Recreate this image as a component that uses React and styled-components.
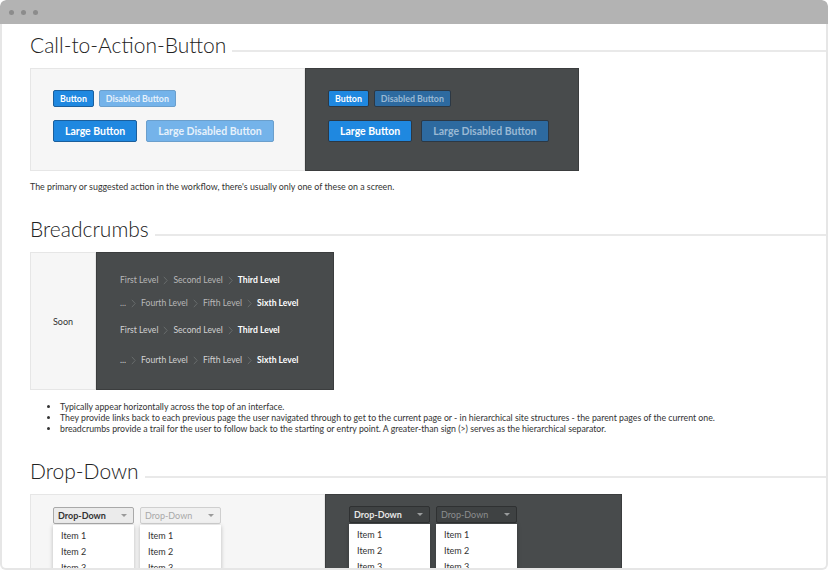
import React from 'react';
import styled, { createGlobalStyle } from 'styled-components';

const GlobalStyle = createGlobalStyle`
    body {
        margin: 0;
        background: #ffffff;
        font-family: Lato, "Open Sans", sans-serif;
        color: #333;
    }
`

const Window = styled.div`
    width: 828px;
    height: 570px;
    display: flex;
    flex-direction: column;
    border-radius: 6px 6px 0 0;
    overflow: hidden;
`

const TitleBar = styled.div`
    height: 24px;
    flex-shrink: 0;
    background: #b3b3b3;
    border-radius: 6px 6px 0 0;
    display: flex;
    align-items: center;
    gap: 7px;
    padding-left: 9px;
`

const Dot = styled.span`
    width: 5px;
    height: 5px;
    border-radius: 50%;
    background: #8c8c8c;
`

const Content = styled.div`
    flex: 1;
    min-height: 0;
    overflow: hidden;
    border: 2px solid #e6e6e6;
    border-top: none;
    border-radius: 0 0 6px 6px;
    padding: 9px 0 0 28px;
`

const Section = styled.section`
    margin-bottom: 25px;
`

const HeadingRow = styled.div`
    display: flex;
    align-items: flex-end;
    margin-bottom: 11px;
`

const Heading = styled.h2`
    margin: 0;
    font-weight: 300;
    font-size: 21px;
    line-height: 24px;
    color: #222;
    white-space: nowrap;
`

const HeadingLine = styled.div`
    flex: 1;
    height: 2px;
    background: #e9e9e9;
    margin: 0 0 5px 6px;
`

const Demo = styled.div`
    display: flex;
    height: ${p => p.height}px;
`

const Pane = styled.div`
    width: ${p => p.width}px;
    box-sizing: border-box;
    background: ${p => (p.dark ? '#484b4c' : '#f6f6f6')};
    border: 1px solid ${p => (p.dark ? '#3b3d3e' : '#e6e6e6')};
    padding: ${p => p.pad || '21px 0 0 22px'};
    display: flex;
    flex-direction: column;
    align-items: flex-start;
`

const CenterPane = styled(Pane)`
    padding: 0;
    align-items: center;
    justify-content: center;
    font-size: 9px;
    color: #333;
`

const ButtonRow = styled.div`
    display: flex;
    gap: ${p => (p.large ? 9 : 5)}px;
    margin-bottom: ${p => (p.large ? 0 : 13)}px;
`

const Button = styled.button`
    font-family: Lato, "Open Sans", sans-serif;
    font-weight: 700;
    font-size: ${p => (p.large ? 10.5 : 8.8)}px;
    height: ${p => (p.large ? 22 : 17)}px;
    padding: 0 ${p => (p.large ? 11 : 6)}px;
    border-radius: 2px;
    cursor: pointer;
    background: ${p => (p.disabled ? (p.dark ? '#2d6aa0' : '#74b3ea') : '#1f88e0')};
    color: ${p => (p.disabled ? (p.dark ? '#9ab9d4' : '#e6f1fb') : '#ffffff')};
    border: 1px solid ${p => (p.dark ? '#2c3844' : p.disabled ? '#6b9fcc' : '#1b5f9c')};
`

const Caption = styled.p`
    margin: 10px 0 0;
    font-size: 8.85px;
    color: #333;
`

const Crumbs = styled.div`
    display: flex;
    align-items: center;
    gap: 5px;
    font-size: 8.6px;
    color: ${p => (p.large ? '#d2d2d2' : '#b8b8b8')};
    margin-bottom: ${p => p.gap}px;
`

const Crumb = styled.span`
    color: ${p => (p.current ? '#ffffff' : 'inherit')};
    font-weight: ${p => (p.current ? 700 : 400)};
`

const Sep = styled.svg`
    width: 5px;
    height: 9px;
    flex-shrink: 0;
`

const BulletList = styled.ul`
    margin: 11px 0 0;
    padding-left: 30px;
    font-size: 8.75px;
    line-height: 11px;
    color: #333;
`

const DropGroup = styled.div`
    display: flex;
    gap: 6px;
`

const DropWrap = styled.div`
    width: 81px;
    display: flex;
    flex-direction: column;
`

const DropButton = styled.div`
    height: 17px;
    box-sizing: border-box;
    display: flex;
    align-items: center;
    justify-content: space-between;
    padding: 0 6px 0 4px;
    font-size: 9px;
    border-radius: 2px;
    background: ${p => (p.dark ? '#3f4243' : p.disabled ? '#f0f0f0' : '#ebebeb')};
    border: 1px solid ${p => (p.dark ? '#2f3132' : p.disabled ? '#cfcfcf' : '#a9a9a9')};
    color: ${p => (p.dark ? (p.disabled ? '#8c8e8f' : '#e6e6e6') : p.disabled ? '#a8a8a8' : '#333')};
    font-weight: ${p => (p.disabled ? 400 : 700)};

    &::after {
        content: '';
        border-left: 3px solid transparent;
        border-right: 3px solid transparent;
        border-top: 3px solid ${p => (p.dark ? '#9a9c9d' : '#9a9a9a')};
    }
`

const Menu = styled.ul`
    list-style: none;
    margin: 1px 0 0;
    padding: 3px 0;
    background: #fff;
    box-shadow: 0 1px 4px rgba(0, 0, 0, 0.25);
    border-radius: 0 0 2px 2px;
`

const MenuItem = styled.li`
    font-size: 9px;
    line-height: 16px;
    padding-left: 8px;
    color: #333;
`

function Chevron() {
    return (
        <Sep viewBox="0 0 5 9">
            <path d="M0.8 0.8 L4.2 4.5 L0.8 8.2" fill="none" stroke="#707374" strokeWidth="0.8" />
        </Sep>
    );
}

function Breadcrumb({ items, large, gap }) {
    return (
        <Crumbs large={large} gap={gap}>
            {items.map((item, i) => (
                <React.Fragment key={item}>
                    {i > 0 && <Chevron />}
                    <Crumb current={i === items.length - 1}>{item}</Crumb>
                </React.Fragment>
            ))}
        </Crumbs>
    );
}

function Dropdown({ dark, disabled }) {
    return (
        <DropWrap>
            <DropButton dark={dark} disabled={disabled}>Drop-Down</DropButton>
            <Menu>
                <MenuItem>Item 1</MenuItem>
                <MenuItem>Item 2</MenuItem>
                <MenuItem>Item 3</MenuItem>
            </Menu>
        </DropWrap>
    );
}

function Title({ children }) {
    return (
        <HeadingRow>
            <Heading>{children}</Heading>
            <HeadingLine />
        </HeadingRow>
    );
}

function ButtonSet({ dark }) {
    return (
        <>
            <ButtonRow>
                <Button dark={dark}>Button</Button>
                <Button dark={dark} disabled>Disabled Button</Button>
            </ButtonRow>
            <ButtonRow large>
                <Button dark={dark} large>Large Button</Button>
                <Button dark={dark} large disabled>Large Disabled Button</Button>
            </ButtonRow>
        </>
    );
}

const first = ['First Level', 'Second Level', 'Third Level'];
const deep = ['...', 'Fourth Level', 'Fifth Level', 'Sixth Level'];

export default function App() {
    return (
        <>
            <GlobalStyle />
            <Window>
                <TitleBar>
                    <Dot /><Dot /><Dot />
                </TitleBar>
                <Content>
                    <Section>
                        <Title>Call-to-Action-Button</Title>
                        <Demo height={103}>
                            <Pane width={275}><ButtonSet /></Pane>
                            <Pane width={274} dark pad="21px 0 0 22px"><ButtonSet dark /></Pane>
                        </Demo>
                        <Caption>The primary or suggested action in the workflow, there's usually only one of these on a screen.</Caption>
                    </Section>

                    <Section>
                        <Title>Breadcrumbs</Title>
                        <Demo height={138}>
                            <CenterPane width={66}>Soon</CenterPane>
                            <Pane width={238} dark pad="22px 0 0 23px">
                                <Breadcrumb items={first} gap={13} />
                                <Breadcrumb items={deep} gap={17} />
                                <Breadcrumb items={first} large gap={20} />
                                <Breadcrumb items={deep} large gap={0} />
                            </Pane>
                        </Demo>
                        <BulletList>
                            <li>Typically appear horizontally across the top of an interface.</li>
                            <li>They provide links back to each previous page the user navigated through to get to the current page or - in hierarchical site structures - the parent pages of the current one.</li>
                            <li>breadcrumbs provide a trail for the user to follow back to the starting or entry point. A greater-than sign (&gt;) serves as the hierarchical separator.</li>
                        </BulletList>
                    </Section>

                    <Section>
                        <Title>Drop-Down</Title>
                        <Demo height={200}>
                            <Pane width={295} pad="12px 0 0 22px">
                                <DropGroup>
                                    <Dropdown />
                                    <Dropdown disabled />
                                </DropGroup>
                            </Pane>
                            <Pane width={297} dark pad="11px 0 0 23px">
                                <DropGroup>
                                    <Dropdown dark />
                                    <Dropdown dark disabled />
                                </DropGroup>
                            </Pane>
                        </Demo>
                    </Section>
                </Content>
            </Window>
        </>
    );
}
